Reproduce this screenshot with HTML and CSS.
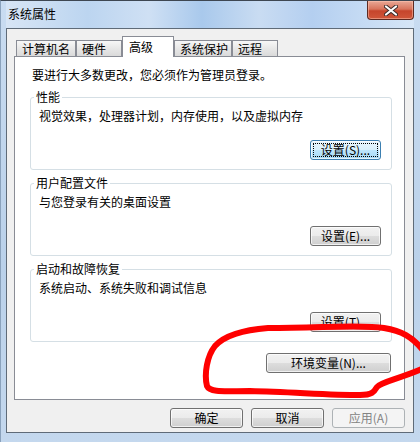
FILE: index.html
```html
<!DOCTYPE html>
<html lang="zh-CN">
<head>
  <meta charset="UTF-8" />
  <title>系统属性</title>
  <link rel="stylesheet" href="styles.css">
</head>
<body>

  <div class="window">
    <div class="titlebar">
      <span class="title">系统属性</span>
      <button class="close" title="关闭">
        <svg width="14" height="11" viewBox="0 0 14 11">
          <path d="M2 1.5 L12 9.5 M12 1.5 L2 9.5" stroke="#3a2a28" stroke-width="4" stroke-linecap="round"/>
          <path d="M2 1.5 L12 9.5 M12 1.5 L2 9.5" stroke="#ffffff" stroke-width="2.2" stroke-linecap="round"/>
        </svg>
      </button>
    </div>

    <div class="client">
      <!-- tabs -->
      <div class="tabs">
        <div class="tab w1">计算机名</div>
        <div class="tab w2">硬件</div>
        <div class="tab active">高级</div>
        <div class="tab w4">系统保护</div>
        <div class="tab w2">远程</div>
      </div>

      <div class="panel">
        <p class="intro">要进行大多数更改，您必须作为管理员登录。</p>

        <fieldset class="group">
          <legend>性能</legend>
          <p class="desc">视觉效果，处理器计划，内存使用，以及虚拟内存</p>
          <div class="actions">
            <button class="btn default">设置(S)...</button>
          </div>
        </fieldset>

        <fieldset class="group">
          <legend>用户配置文件</legend>
          <p class="desc">与您登录有关的桌面设置</p>
          <div class="actions">
            <button class="btn">设置(E)...</button>
          </div>
        </fieldset>

        <fieldset class="group">
          <legend>启动和故障恢复</legend>
          <p class="desc">系统启动、系统失败和调试信息</p>
          <div class="actions">
            <button class="btn">设置(T)...</button>
          </div>
        </fieldset>

        <div class="env-row">
          <button class="btn env">环境变量(N)...</button>
        </div>
      </div>

      <div class="footer">
        <button class="btn wide">确定</button>
        <button class="btn wide">取消</button>
        <button class="btn wide" disabled>应用(A)</button>
      </div>
    </div>
  </div>

  <!-- hand-drawn marker over the screenshot -->
  <svg class="marker" width="420" height="442" viewBox="0 0 420 442">
    <path d="M422 349 C412 337 402 331 384 328 C362 324 322 328 268 328 C242 330 224 336 215 346 C207 356 204 374 207 386 C210 393 226 391 250 391 C292 392 330 395 360 395 C372 395 374 392 377 387 C381 382 396 380 422 369"
          fill="none" stroke="#ff0000" stroke-width="6" stroke-linecap="round" stroke-linejoin="round"/>
  </svg>

</body>
</html>
```

FILE: styles.css
```css
* {
  box-sizing: border-box;
}

body {
  margin: 0;
  width: 420px;
  height: 442px;
  overflow: hidden;
  position: relative;
  font-family: "Noto Sans CJK SC", "Liberation Sans", sans-serif;
  font-size: 12px;
  color: #000;
  background: #bcd3ea;
}

.window {
  width: 420px;
  height: 442px;
  padding: 0 6px 9px 5px;
  border-top: 1px solid #3e4752;
  border-left: 1px solid #8aa2bc;
  background: linear-gradient(to bottom, #c9dcf1, #bad1ea 60%, #c4d8ee);
}

.titlebar {
  height: 27px;
  display: flex;
  align-items: flex-start;
  background: linear-gradient(to right, #d7e5f5 0%, #bcd5f0 20%, #cfe0f4 35%, #a9c9ec 48%, #c9dcf2 62%, #b4cff0 75%, #d6e6f7 100%);
}

.title {
  padding: 6px 0 0 2px;
  line-height: 14px;
}

.close {
  margin-left: auto;
  width: 47px;
  height: 19px;
  padding: 0;
  border: 1px solid #5d2a22;
  border-top: none;
  border-radius: 0 0 4px 4px;
  background: linear-gradient(to bottom, #e9a896 0%, #d8745c 45%, #c6452c 55%, #d0563a 100%);
  box-shadow: inset 0 0 0 1px rgba(255, 200, 180, 0.5);
  display: flex;
  align-items: center;
  justify-content: center;
}

.client {
  height: 405px;
  border: 1px solid #5f6b78;
  background: #f0f0f0;
  padding: 7px 8px 0 7px;
}

/* tabs */
.tabs {
  height: 21px;
  display: flex;
  align-items: flex-end;
  padding-left: 2px;
  margin-bottom: -1px;
  position: relative;
  z-index: 1;
}

.tab {
  height: 16px;
  margin-bottom: 1px;
  padding: 1px 0 0 5px;
  line-height: 14px;
  white-space: nowrap;
  border: 1px solid #898c95;
  border-bottom: none;
  background: linear-gradient(to bottom, #f7f7f7, #e6e6e6 55%, #dadada);
}

.w1 { width: 60px; }
.w2 { width: 46px; }
.w4 { width: 58px; }

.tab.active {
  width: 52px;
  height: 21px;
  margin-bottom: 0;
  padding: 3px 0 0 6px;
  background: #fff;
}

.panel {
  height: 344px;
  border: 1px solid #898c95;
  background: #fff;
  padding: 11px 12px 0 15px;
}

.intro {
  margin: 0 0 8px 2px;
  line-height: 14px;
}

.group {
  margin: 0 0 6px 0;
  min-width: 0;
  padding: 0 10px 9px 3px;
  border: 1px solid #d5dfe5;
  border-radius: 3px;
}

.group legend {
  padding: 0 2px;
  line-height: 14px;
}

.desc {
  margin: 5px 0 0 0;
  padding-left: 5px;
  line-height: 14px;
}

.actions {
  display: flex;
  justify-content: flex-end;
  margin-top: 17px;
}

/* buttons */
.btn {
  height: 20px;
  width: 71px;
  padding: 0;
  font-family: inherit;
  font-size: 12px;
  line-height: 16px;
  color: #000;
  border: 1px solid #707070;
  border-radius: 3px;
  background: linear-gradient(to bottom, #f2f2f2 0%, #ebebeb 50%, #dddddd 51%, #cfcfcf 100%);
  box-shadow: inset 0 0 0 1px rgba(255, 255, 255, 0.7);
}

.btn.default {
  border-color: #3c7fb1;
  background: linear-gradient(to bottom, #eaf6fd 0%, #d9f0fc 50%, #bee6fd 51%, #a7d9f5 100%);
  outline: 1px dotted #000;
  outline-offset: -4px;
}

.btn:disabled {
  color: #838383;
  border-color: #adb2b5;
  background: #f4f4f4;
  box-shadow: none;
}

.env-row {
  display: flex;
  justify-content: flex-end;
  margin: 11px 1px 0 0;
}

.btn.env {
  width: 125px;
}

.footer {
  display: flex;
  justify-content: flex-end;
  gap: 8px;
  margin-top: 8px;
}

.btn.wide {
  width: 73px;
}

/* annotation drawn over the window */
.marker {
  position: absolute;
  left: 0;
  top: 0;
  pointer-events: none;
}
```
